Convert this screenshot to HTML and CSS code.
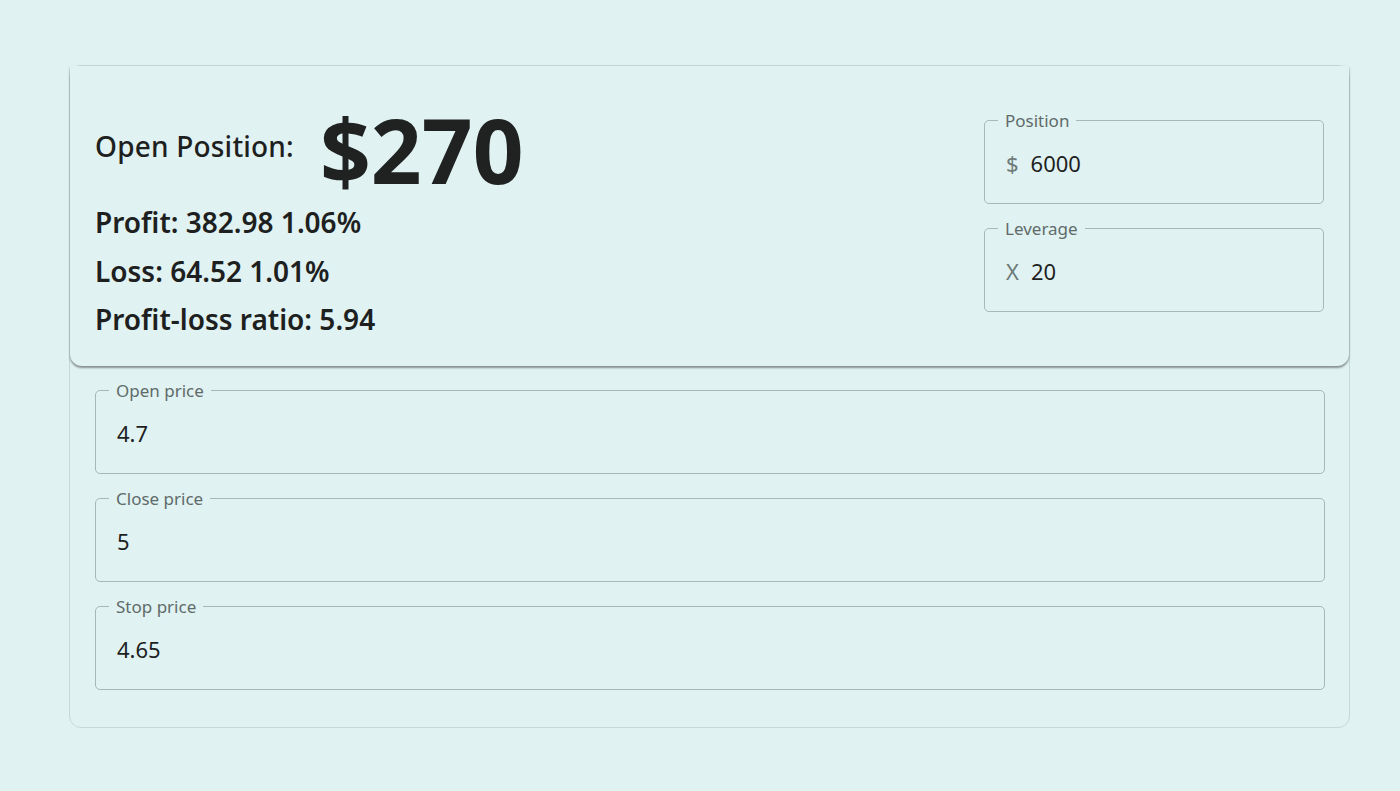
FILE: index.html
```html
<!DOCTYPE html>
<html lang="en">
<head>
<meta charset="utf-8">
<title>Position calculator</title>
<link rel="stylesheet" href="styles.css">
</head>
<body>
<div class="page">
  <div class="panel">
    <div class="summary">
      <div class="summary-left">
        <div class="headline">
          <span class="headline-label">Open Position:</span>
          <span class="headline-value">$270</span>
        </div>
        <div class="stat">Profit: 382.98 1.06%</div>
        <div class="stat">Loss: 64.52 1.01%</div>
        <div class="stat">Profit-loss ratio: 5.94</div>
      </div>
      <div class="summary-right">
        <fieldset class="field">
          <legend class="field-label">Position</legend>
          <div class="field-input"><span class="adorn">$</span><span class="value">6000</span></div>
        </fieldset>
        <fieldset class="field">
          <legend class="field-label">Leverage</legend>
          <div class="field-input"><span class="adorn adorn-x">X</span><span class="value">20</span></div>
        </fieldset>
      </div>
    </div>
    <div class="prices">
      <fieldset class="field">
        <legend class="field-label">Open price</legend>
        <div class="field-input"><span class="value">4.7</span></div>
      </fieldset>
      <fieldset class="field">
        <legend class="field-label">Close price</legend>
        <div class="field-input"><span class="value">5</span></div>
      </fieldset>
      <fieldset class="field">
        <legend class="field-label">Stop price</legend>
        <div class="field-input"><span class="value">4.65</span></div>
      </fieldset>
    </div>
  </div>
</div>
</body>
</html>
```

FILE: styles.css
```css
html, body {
  margin: 0;
  padding: 0;
  background: #e0f2f1;
  font-family: "Noto Sans", "Open Sans", sans-serif;
  color: #1e1f1f;
}

.page {
  padding: 65px 0 0 69px;
}

.panel {
  width: 1281px;
  height: 663px;
  box-sizing: border-box;
  border: 1px solid #c6d8d7;
  border-radius: 12px;
}

.summary {
  display: flex;
  justify-content: space-between;
  align-items: flex-start;
  padding: 28px 25px 22px 25px;
  border-radius: 0 0 12px 12px;
  background: #e0f2f1;
  box-shadow: 0 2px 2px rgba(0, 0, 0, 0.35), 0 1px 3px rgba(0, 0, 0, 0.12);
}

.summary-left {
  display: flex;
  flex-direction: column;
}

.headline {
  display: flex;
  align-items: center;
  gap: 26px;
  height: 110px;
  margin-bottom: -6px;
}

.headline-label {
  font-size: 28px;
  font-weight: 500;
  margin-bottom: 6px;
  letter-spacing: 0.2px;
}

.headline-value {
  font-size: 89px;
  font-weight: 700;
  color: #202221;
}

.stat {
  font-size: 28px;
  font-weight: 600;
  line-height: 48.5px;
}

.summary-right {
  display: flex;
  flex-direction: column;
  gap: 15px;
  width: 340px;
  padding-top: 17px;
}

.field {
  margin: 0;
  padding: 0;
  min-width: 0;
  border: 1px solid #a9b7b6;
  border-radius: 5px;
}

.field-label {
  margin-left: 13px;
  padding: 0 7px;
  font-size: 17px;
  line-height: 19px;
  color: #5f6b6a;
}

.field-input {
  display: flex;
  align-items: center;
  height: 73px;
  box-sizing: border-box;
  padding: 0 0 7px 21px;
  font-size: 22px;
}

.adorn {
  color: #6d7a79;
  margin-right: 12px;
}

.adorn-x {
  margin-right: 12px;
}

.value {
  color: #1e1f1f;
}

.prices {
  display: flex;
  flex-direction: column;
  gap: 15px;
  padding: 15px 24px 0 25px;
}
```
